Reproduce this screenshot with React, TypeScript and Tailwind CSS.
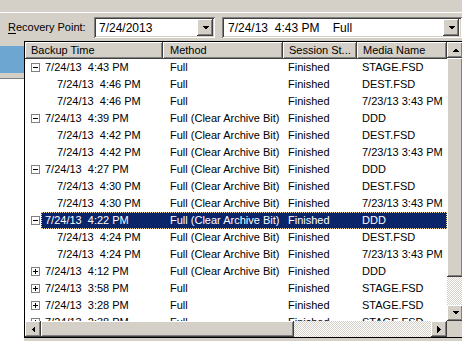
import React from "react";

const FCAB = "Full (Clear Archive Bit)";
const OLD = "7/23/13 3:43 PM";

type Row = { time: string; method: string; media: string; node?: "open" | "closed"; selected?: boolean };

const rows: Row[] = [
    { time: "7/24/13  4:43 PM", method: "Full", media: "STAGE.FSD", node: "open" },
    { time: "7/24/13  4:46 PM", method: "Full", media: "DEST.FSD" },
    { time: "7/24/13  4:46 PM", method: "Full", media: OLD },
    { time: "7/24/13  4:39 PM", method: FCAB, media: "DDD", node: "open" },
    { time: "7/24/13  4:42 PM", method: FCAB, media: "DEST.FSD" },
    { time: "7/24/13  4:42 PM", method: FCAB, media: OLD },
    { time: "7/24/13  4:27 PM", method: FCAB, media: "DDD", node: "open" },
    { time: "7/24/13  4:30 PM", method: FCAB, media: "DEST.FSD" },
    { time: "7/24/13  4:30 PM", method: FCAB, media: OLD },
    { time: "7/24/13  4:22 PM", method: FCAB, media: "DDD", node: "open", selected: true },
    { time: "7/24/13  4:24 PM", method: FCAB, media: "DEST.FSD" },
    { time: "7/24/13  4:24 PM", method: FCAB, media: OLD },
    { time: "7/24/13  4:12 PM", method: FCAB, media: "DDD", node: "closed" },
    { time: "7/24/13  3:58 PM", method: "Full", media: "STAGE.FSD", node: "closed" },
    { time: "7/24/13  3:28 PM", method: "Full", media: "STAGE.FSD", node: "closed" },
    { time: "7/24/13  2:38 PM", method: "Full", media: "STAGE.FSD", node: "closed" },
];

const raised = "bg-[#d4d0c8] shadow-[inset_-1px_-1px_#404040,inset_1px_1px_#ffffff,inset_-2px_-2px_#808080,inset_2px_2px_#d4d0c8]";
const sunken = "bg-white shadow-[inset_1px_1px_#808080,inset_-1px_-1px_#ffffff,inset_2px_2px_#404040,inset_-2px_-2px_#d4d0c8]";
const checker = "bg-[image:repeating-conic-gradient(#d4d0c8_0_25%,#ffffff_0_50%)] bg-[length:2px_2px]";

function Arrow({ dir }: { dir: "up" | "down" | "left" | "right" }) {
    const pts = {
        up: "0,4 7,4 3.5,0.5",
        down: "0,0 7,0 3.5,3.5",
        left: "4,0 4,7 0.5,3.5",
        right: "0,0 0,7 3.5,3.5",
    }[dir];
    const horiz = dir === "left" || dir === "right";
    return (
        <svg width={horiz ? 4 : 7} height={horiz ? 7 : 4} viewBox={horiz ? "0 0 4 7" : "0 0 7 4"} shapeRendering="crispEdges">
            <polygon points={pts} fill="#000" />
        </svg>
    );
}

function Btn({ dir, className = "" }: { dir: "up" | "down" | "left" | "right"; className?: string }) {
    return (
        <div className={`${raised} flex items-center justify-center shrink-0 ${className}`}>
            <Arrow dir={dir} />
        </div>
    );
}

function Expander({ open }: { open: boolean }) {
    return (
        <div className="relative w-[9px] h-[9px] border border-[#808080] bg-white shrink-0">
            <div className="absolute left-[1px] top-[3px] w-[5px] h-px bg-black" />
            {!open && <div className="absolute left-[3px] top-[1px] w-px h-[5px] bg-black" />}
        </div>
    );
}

export default function App() {
    return (
        <div className="relative w-[462px] h-[341px] overflow-hidden bg-[#d4d0c8] text-[11px] text-black font-['Liberation_Sans',Arial,sans-serif] leading-none">
            <div className="h-[13px] border-b border-white" />

            {/* toolbar */}
            <div className="flex items-center h-[21px] mt-[4px]">
                <span className="ml-[8px] w-[86px] pb-[1px]">
                    <span className="underline underline-offset-2">R</span>ecovery Point:
                </span>
                <div className={`${sunken} w-[121px] h-[21px] flex items-center pl-[5px] pr-[2px]`}>
                    <span className="flex-1 text-[12px]">7/24/2013</span>
                    <Btn dir="down" className="w-[16px] h-[17px]" />
                </div>
                <div className={`${sunken} ml-[7px] flex-1 h-[21px] flex items-center pl-[6px] pr-[3px]`}>
                    <span className="flex-1 text-[12px] whitespace-pre">7/24/13  4:43 PM    Full</span>
                    <Btn dir="down" className="w-[16px] h-[17px]" />
                </div>
            </div>

            {/* page behind the popup */}
            <div className="w-[24px] mt-[8px] h-[27px] bg-[#6ea6d2]" />
            <div className="w-[24px] h-[6px] bg-[#d4d0c8] border-b border-[#808080]" />
            <div className="w-[24px] h-[270px] bg-white" />

            {/* dropdown list */}
            <div className="absolute left-[24px] top-[41px] w-[440px] h-[297px] border border-black bg-white flex flex-col">
                <div className="flex flex-1 min-h-0">
                    <div className="w-[422px] flex flex-col">
                        <div className="flex h-[17px] shrink-0">
                            <div className={`${raised} w-[138px] pl-[6px] flex items-center`}>Backup Time</div>
                            <div className={`${raised} w-[120px] pl-[7px] flex items-center`}>Method</div>
                            <div className={`${raised} w-[74px] pl-[6px] flex items-center`}>Session St...</div>
                            <div className={`${raised} w-[90px] pl-[6px] flex items-center`}>Media Name</div>
                        </div>
                        <div className="flex-1 overflow-hidden">
                            {rows.map((r, i) => (
                                <div key={i} className="flex h-[17px] items-center">
                                    <div className="w-[6px] shrink-0" />
                                    <div className="w-[10px] shrink-0 flex">
                                        {r.node && <Expander open={r.node === "open"} />}
                                    </div>
                                    <div
                                        className={`flex flex-1 h-[17px] items-center ${
                                            r.selected ? "bg-[#0a246a] text-white outline outline-1 outline-dotted outline-[#f5db95] -outline-offset-1" : ""
                                        }`}
                                    >
                                        <div className={`w-[122px] whitespace-pre ${r.node ? "pl-[4px]" : "pl-[16px]"}`}>{r.time}</div>
                                        <div className="w-[120px] pl-[7px] whitespace-nowrap overflow-hidden">{r.method}</div>
                                        <div className="w-[74px] pl-[5px]">Finished</div>
                                        <div className="w-[90px] pl-[5px] whitespace-nowrap">{r.media}</div>
                                    </div>
                                </div>
                            ))}
                        </div>
                    </div>
                    {/* vertical scrollbar */}
                    <div className="w-[16px] flex flex-col">
                        <Btn dir="up" className="h-[16px]" />
                        <div className={`${raised} h-[219px]`} />
                        <div className={`${checker} flex-1`} />
                        <Btn dir="down" className="h-[16px]" />
                    </div>
                </div>
                {/* horizontal scrollbar */}
                <div className="flex h-[16px] shrink-0">
                    <Btn dir="left" className="w-[16px]" />
                    <div className={`${raised} w-[253px]`} />
                    <div className={`${checker} flex-1`} />
                    <Btn dir="right" className="w-[16px]" />
                    <div className="w-[16px] bg-[#d4d0c8]" />
                </div>
            </div>
        </div>
    );
}
